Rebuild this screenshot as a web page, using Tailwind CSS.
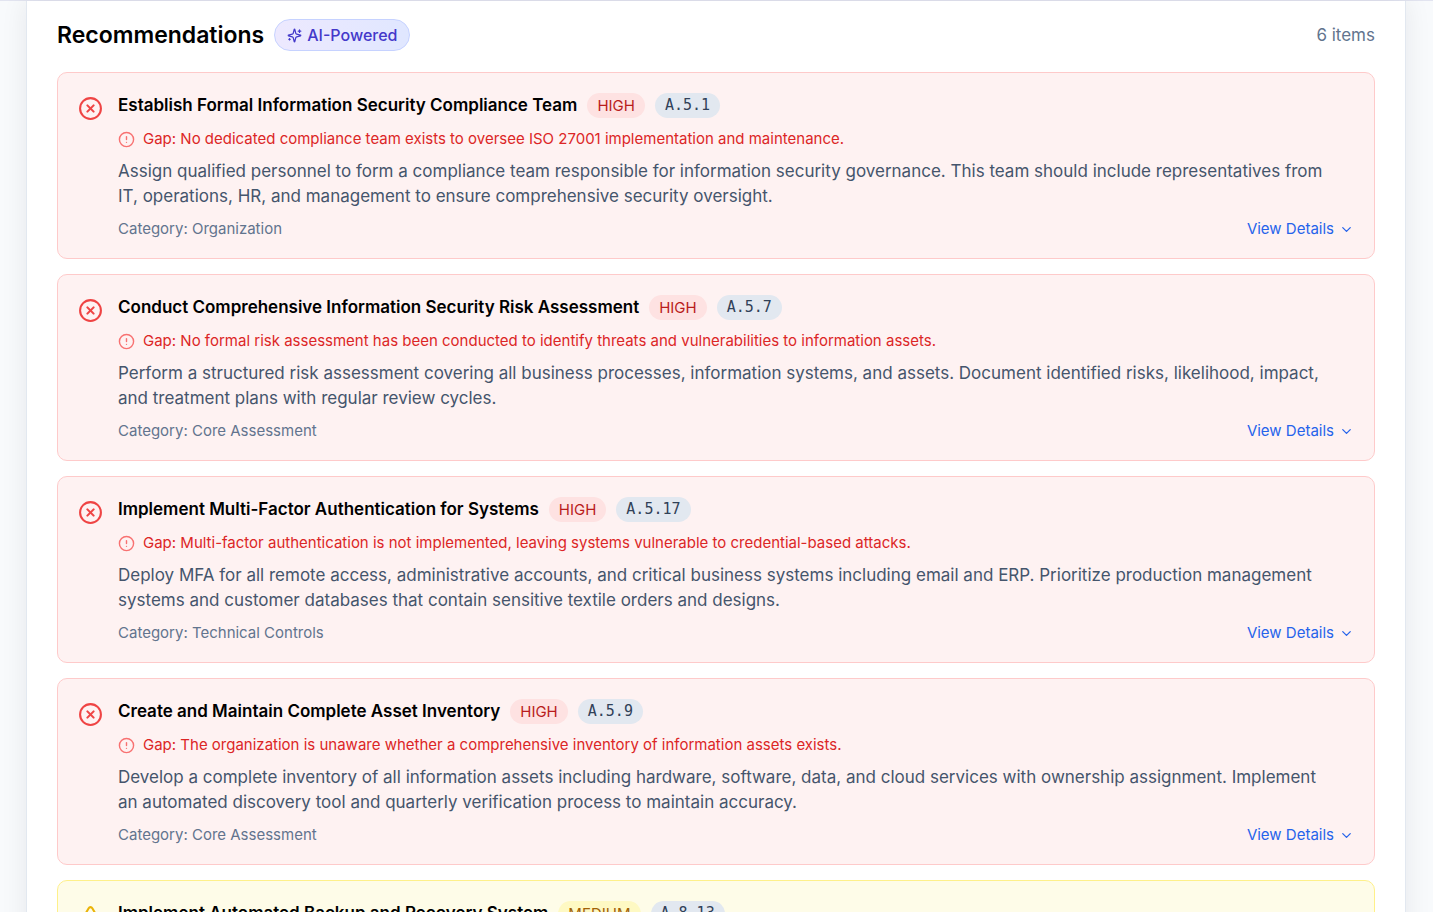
<!DOCTYPE html>
<html lang="en">
<head>
    <meta charset="UTF-8">
    <meta name="viewport" content="width=device-width, initial-scale=1.0">
    <title>Recommendations</title>
    <script src="https://cdn.jsdelivr.net/npm/@tailwindcss/browser@4"></script>
</head>
<body class="h-screen overflow-hidden bg-slate-50 font-['Inter',sans-serif] text-black">
    <!-- Icons -->
    <svg class="hidden" aria-hidden="true">
        <symbol id="icon-x-circle" viewBox="0 0 24 24" fill="none" stroke="currentColor" stroke-width="2" stroke-linecap="round" stroke-linejoin="round">
            <circle cx="12" cy="12" r="10" />
            <path d="m15 9-6 6" />
            <path d="m9 9 6 6" />
        </symbol>
        <symbol id="icon-alert-circle" viewBox="0 0 24 24" fill="none" stroke="currentColor" stroke-width="2" stroke-linecap="round" stroke-linejoin="round">
            <circle cx="12" cy="12" r="10" />
            <path d="M12 8v4" />
            <path d="M12 16h.01" />
        </symbol>
        <symbol id="icon-alert-triangle" viewBox="0 0 24 24" fill="none" stroke="currentColor" stroke-width="2" stroke-linecap="round" stroke-linejoin="round">
            <path d="m21.73 18-8-14a2 2 0 0 0-3.48 0l-8 14A2 2 0 0 0 4 21h16a2 2 0 0 0 1.73-3Z" />
            <path d="M12 9v4" />
            <path d="M12 17h.01" />
        </symbol>
        <symbol id="icon-chevron-down" viewBox="0 0 24 24" fill="none" stroke="currentColor" stroke-width="2" stroke-linecap="round" stroke-linejoin="round">
            <path d="m6 9 6 6 6-6" />
        </symbol>
        <symbol id="icon-sparkles" viewBox="0 0 24 24" fill="none" stroke="currentColor" stroke-width="2" stroke-linecap="round" stroke-linejoin="round">
            <path d="M9.937 15.5A2 2 0 0 0 8.5 14.063l-6.135-1.582a.5.5 0 0 1 0-.962L8.5 9.936A2 2 0 0 0 9.937 8.5l1.582-6.135a.5.5 0 0 1 .963 0L14.063 8.5A2 2 0 0 0 15.5 9.937l6.135 1.581a.5.5 0 0 1 0 .964L15.5 14.063a2 2 0 0 0-1.437 1.437l-1.582 6.135a.5.5 0 0 1-.963 0z" />
            <path d="M20 3v4" />
            <path d="M22 5h-4" />
            <path d="M4 17v2" />
            <path d="M5 18H3" />
        </symbol>
    </svg>

    <div class="border-t border-[#e2e4f0]">
        <main class="mr-[27px] ml-[26px] border-x border-slate-200 bg-white px-[30px] pt-[18px] pb-[30px] shadow-[0_0_25px_rgba(15,23,42,0.08)]">
            <div class="mb-[21px] flex items-center justify-between">
                <div class="flex items-center gap-[10px]">
                    <h1 class="text-[23px] leading-8 font-semibold">Recommendations</h1>
                    <span class="flex h-8 items-center gap-[5px] rounded-full border border-indigo-200 bg-linear-to-r from-violet-100 to-indigo-100 px-3 text-base font-medium text-[#4338ca]">
                        <svg class="size-[15px]"><use href="#icon-sparkles" /></svg>
                        AI-Powered
                    </span>
                </div>
                <span class="text-[17px] leading-8 text-slate-500">6 items</span>
            </div>

            <div class="flex flex-col gap-[15px]">
                <article class="flex gap-[15px] rounded-[10px] border border-[#fecaca] bg-[#fef2f2] px-5 pt-5 pb-[19px]">
                    <svg class="mt-[3px] size-[25px] shrink-0 text-[#ef4444]"><use href="#icon-x-circle" /></svg>
                    <div class="flex-1">
                        <div class="flex items-center gap-[10px]">
                            <h2 class="text-[17px] leading-[25px] font-semibold">Establish Formal Information Security Compliance Team</h2>
                            <span class="rounded-full bg-[#fee2e2] px-[10px] text-[15px] leading-[25px] text-[#b91c1c]">HIGH</span>
                            <span class="rounded-full bg-slate-200 px-[10px] font-['DejaVu_Sans_Mono',monospace] text-[15px] leading-[25px] text-slate-700">A.5.1</span>
                        </div>
                        <p class="mt-[10px] flex items-center gap-2 text-[15px] leading-[22px] text-[#dc2626]">
                            <svg class="size-[17px] shrink-0 text-[#f87171]"><use href="#icon-alert-circle" /></svg>
                            Gap: No dedicated compliance team exists to oversee ISO 27001 implementation and maintenance.
                        </p>
                        <p class="mt-[9px] pr-5 text-[17px] leading-[25px] text-slate-600">Assign qualified personnel to form a compliance team responsible for information security governance. This team should include representatives from IT, operations, HR, and management to ensure comprehensive security oversight.</p>
                        <div class="mt-[10px] flex items-center justify-between text-[15px] leading-5">
                            <span class="text-slate-500">Category: Organization</span>
                            <button type="button" class="flex items-center gap-[5px] text-[#2563eb]">View Details <svg class="size-[15px]"><use href="#icon-chevron-down" /></svg></button>
                        </div>
                    </div>
                </article>

                <article class="flex gap-[15px] rounded-[10px] border border-[#fecaca] bg-[#fef2f2] px-5 pt-5 pb-[19px]">
                    <svg class="mt-[3px] size-[25px] shrink-0 text-[#ef4444]"><use href="#icon-x-circle" /></svg>
                    <div class="flex-1">
                        <div class="flex items-center gap-[10px]">
                            <h2 class="text-[17px] leading-[25px] font-semibold">Conduct Comprehensive Information Security Risk Assessment</h2>
                            <span class="rounded-full bg-[#fee2e2] px-[10px] text-[15px] leading-[25px] text-[#b91c1c]">HIGH</span>
                            <span class="rounded-full bg-slate-200 px-[10px] font-['DejaVu_Sans_Mono',monospace] text-[15px] leading-[25px] text-slate-700">A.5.7</span>
                        </div>
                        <p class="mt-[10px] flex items-center gap-2 text-[15px] leading-[22px] text-[#dc2626]">
                            <svg class="size-[17px] shrink-0 text-[#f87171]"><use href="#icon-alert-circle" /></svg>
                            Gap: No formal risk assessment has been conducted to identify threats and vulnerabilities to information assets.
                        </p>
                        <p class="mt-[9px] pr-5 text-[17px] leading-[25px] text-slate-600">Perform a structured risk assessment covering all business processes, information systems, and assets. Document identified risks, likelihood, impact, and treatment plans with regular review cycles.</p>
                        <div class="mt-[10px] flex items-center justify-between text-[15px] leading-5">
                            <span class="text-slate-500">Category: Core Assessment</span>
                            <button type="button" class="flex items-center gap-[5px] text-[#2563eb]">View Details <svg class="size-[15px]"><use href="#icon-chevron-down" /></svg></button>
                        </div>
                    </div>
                </article>

                <article class="flex gap-[15px] rounded-[10px] border border-[#fecaca] bg-[#fef2f2] px-5 pt-5 pb-[19px]">
                    <svg class="mt-[3px] size-[25px] shrink-0 text-[#ef4444]"><use href="#icon-x-circle" /></svg>
                    <div class="flex-1">
                        <div class="flex items-center gap-[10px]">
                            <h2 class="text-[17px] leading-[25px] font-semibold">Implement Multi-Factor Authentication for Systems</h2>
                            <span class="rounded-full bg-[#fee2e2] px-[10px] text-[15px] leading-[25px] text-[#b91c1c]">HIGH</span>
                            <span class="rounded-full bg-slate-200 px-[10px] font-['DejaVu_Sans_Mono',monospace] text-[15px] leading-[25px] text-slate-700">A.5.17</span>
                        </div>
                        <p class="mt-[10px] flex items-center gap-2 text-[15px] leading-[22px] text-[#dc2626]">
                            <svg class="size-[17px] shrink-0 text-[#f87171]"><use href="#icon-alert-circle" /></svg>
                            Gap: Multi-factor authentication is not implemented, leaving systems vulnerable to credential-based attacks.
                        </p>
                        <p class="mt-[9px] pr-5 text-[17px] leading-[25px] text-slate-600">Deploy MFA for all remote access, administrative accounts, and critical business systems including email and ERP. Prioritize production management systems and customer databases that contain sensitive textile orders and designs.</p>
                        <div class="mt-[10px] flex items-center justify-between text-[15px] leading-5">
                            <span class="text-slate-500">Category: Technical Controls</span>
                            <button type="button" class="flex items-center gap-[5px] text-[#2563eb]">View Details <svg class="size-[15px]"><use href="#icon-chevron-down" /></svg></button>
                        </div>
                    </div>
                </article>

                <article class="flex gap-[15px] rounded-[10px] border border-[#fecaca] bg-[#fef2f2] px-5 pt-5 pb-[19px]">
                    <svg class="mt-[3px] size-[25px] shrink-0 text-[#ef4444]"><use href="#icon-x-circle" /></svg>
                    <div class="flex-1">
                        <div class="flex items-center gap-[10px]">
                            <h2 class="text-[17px] leading-[25px] font-semibold">Create and Maintain Complete Asset Inventory</h2>
                            <span class="rounded-full bg-[#fee2e2] px-[10px] text-[15px] leading-[25px] text-[#b91c1c]">HIGH</span>
                            <span class="rounded-full bg-slate-200 px-[10px] font-['DejaVu_Sans_Mono',monospace] text-[15px] leading-[25px] text-slate-700">A.5.9</span>
                        </div>
                        <p class="mt-[10px] flex items-center gap-2 text-[15px] leading-[22px] text-[#dc2626]">
                            <svg class="size-[17px] shrink-0 text-[#f87171]"><use href="#icon-alert-circle" /></svg>
                            Gap: The organization is unaware whether a comprehensive inventory of information assets exists.
                        </p>
                        <p class="mt-[9px] pr-5 text-[17px] leading-[25px] text-slate-600">Develop a complete inventory of all information assets including hardware, software, data, and cloud services with ownership assignment. Implement an automated discovery tool and quarterly verification process to maintain accuracy.</p>
                        <div class="mt-[10px] flex items-center justify-between text-[15px] leading-5">
                            <span class="text-slate-500">Category: Core Assessment</span>
                            <button type="button" class="flex items-center gap-[5px] text-[#2563eb]">View Details <svg class="size-[15px]"><use href="#icon-chevron-down" /></svg></button>
                        </div>
                    </div>
                </article>

                <article class="flex gap-[15px] rounded-[10px] border border-[#fef08a] bg-[#fefce8] px-5 pt-5 pb-[19px]">
                    <svg class="mt-[3px] size-[25px] shrink-0 text-[#eab308]"><use href="#icon-alert-triangle" /></svg>
                    <div class="flex-1">
                        <div class="flex items-center gap-[10px]">
                            <h2 class="text-[17px] leading-[25px] font-semibold">Implement Automated Backup and Recovery System</h2>
                            <span class="rounded-full bg-[#fef9c3] px-[10px] text-[15px] leading-[25px] text-[#a16207]">MEDIUM</span>
                            <span class="rounded-full bg-slate-200 px-[10px] font-['DejaVu_Sans_Mono',monospace] text-[15px] leading-[25px] text-slate-700">A.8.13</span>
                        </div>
                    </div>
                </article>
            </div>
        </main>
    </div>
</body>
</html>
